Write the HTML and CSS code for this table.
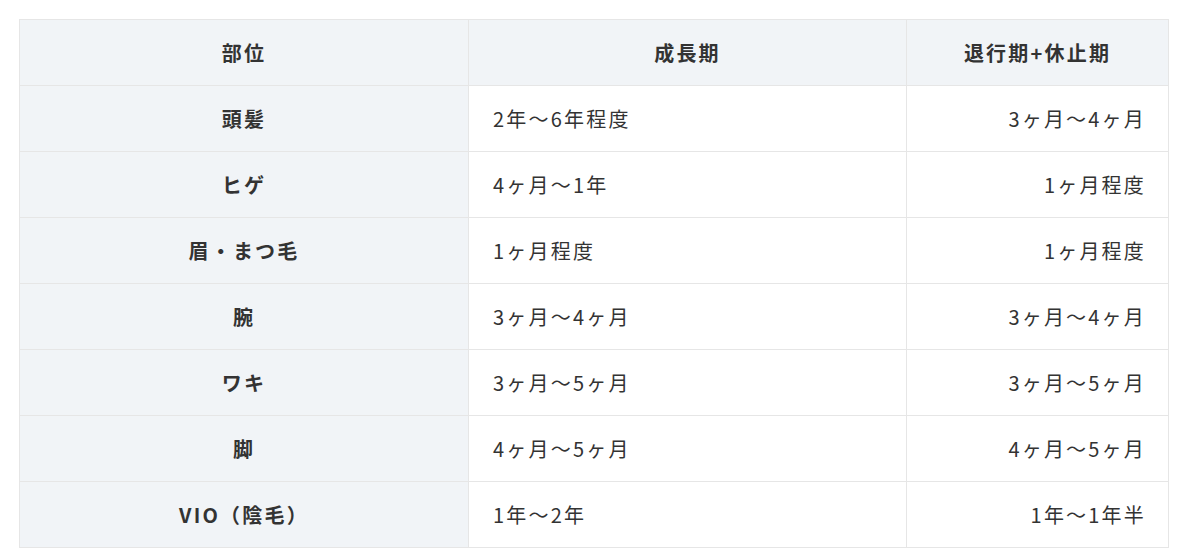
FILE: index.html
```html
<!DOCTYPE html>
<html lang="ja">
<head>
<meta charset="utf-8">
<link rel="stylesheet" href="styles.css">
</head>
<body>
<table class="cycle">
  <colgroup>
    <col class="c1"><col class="c2"><col class="c3">
  </colgroup>
  <thead>
    <tr><th>部位</th><th>成長期</th><th>退行期+休止期</th></tr>
  </thead>
  <tbody>
    <tr><th>頭髪</th><td>2年～6年程度</td><td class="r">3ヶ月～4ヶ月</td></tr>
    <tr><th>ヒゲ</th><td>4ヶ月～1年</td><td class="r">1ヶ月程度</td></tr>
    <tr><th>眉・まつ毛</th><td>1ヶ月程度</td><td class="r">1ヶ月程度</td></tr>
    <tr><th>腕</th><td>3ヶ月～4ヶ月</td><td class="r">3ヶ月～4ヶ月</td></tr>
    <tr><th>ワキ</th><td>3ヶ月～5ヶ月</td><td class="r">3ヶ月～5ヶ月</td></tr>
    <tr><th>脚</th><td>4ヶ月～5ヶ月</td><td class="r">4ヶ月～5ヶ月</td></tr>
    <tr><th>VIO（陰毛）</th><td>1年～2年</td><td class="r">1年～1年半</td></tr>
  </tbody>
</table>
</body>
</html>
```
FILE: styles.css
```css
html, body {
  margin: 0;
  background: #ffffff;
}
body {
  padding: 19px 0 0 19px;
  font-family: "Noto Sans CJK JP", "Noto Sans", sans-serif;
  color: #333333;
}
.cycle {
  border-collapse: collapse;
  width: 1149px;
  table-layout: fixed;
  font-size: 20px;
  letter-spacing: 0.11em;
}
.c1 { width: 449px; }
.c2 { width: 438px; }
.c3 { width: 262px; }
.cycle th, .cycle td {
  border: 1px solid #e6e6e6;
  height: 66px;
  padding: 0 24px;
  box-sizing: border-box;
  line-height: 1.5;
  vertical-align: middle;
}
.cycle th {
  background: #f1f4f7;
  font-weight: 700;
  text-align: center;
}
.cycle td {
  background: #ffffff;
  font-weight: 400;
  text-align: left;
}
.cycle td.r {
  text-align: right;
  padding-right: 22px;
}
```
